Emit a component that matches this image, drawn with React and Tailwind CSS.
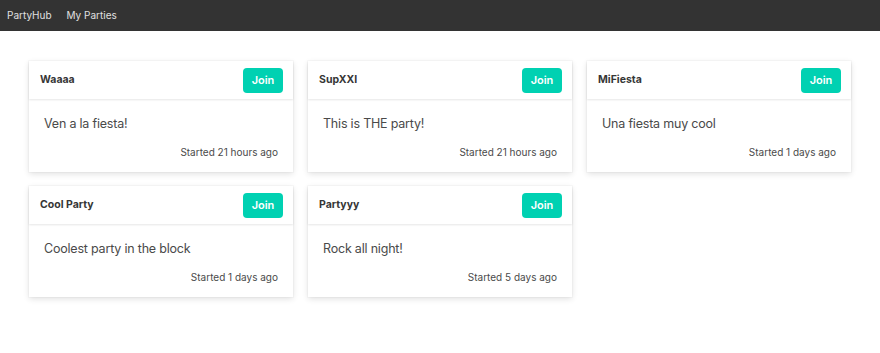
const parties = [
  { name: "Waaaa", desc: "Ven a la fiesta!", started: "Started 21 hours ago" },
  { name: "SupXXI", desc: "This is THE party!", started: "Started 21 hours ago" },
  { name: "MiFiesta", desc: "Una fiesta muy cool", started: "Started 1 days ago" },
  { name: "Cool Party", desc: "Coolest party in the block", started: "Started 1 days ago" },
  { name: "Partyyy", desc: "Rock all night!", started: "Started 5 days ago" },
];

function Card({ p }) {
  return (
    <div className="bg-white h-[111px] flex flex-col shadow-[0_2px_6px_rgba(10,10,10,0.12),0_0_0_1px_rgba(10,10,10,0.02)]">
      <div className="h-[38px] flex items-center justify-between pl-[11px] pr-[10px] shadow-[0_1px_2px_rgba(10,10,10,0.1)]">
        <span className="text-[10.5px] font-bold text-[#363636]">{p.name}</span>
        <button className="w-[40px] h-[25px] rounded-[4px] bg-[#00d1b2] text-white text-[11px] font-semibold">Join</button>
      </div>
      <div className="flex flex-col px-[15px] pt-[16px]">
        <p className="text-[12.5px] tracking-[-0.2px] text-[#4a4a4a] leading-[18px]">{p.desc}</p>
        <p className="text-[10px] text-[#4a4a4a] text-right mt-[12px] leading-[14px]">{p.started}</p>
      </div>
    </div>
  );
}

export default function App() {
  return (
    <div className="min-h-[353px] bg-white" style={{ fontFamily: "Inter, 'Noto Sans', sans-serif" }}>
      <nav className="h-[31px] bg-[#333333] flex items-center px-[7px] gap-[15px] text-[10px] text-[#e0e0e0]">
        <span>PartyHub</span>
        <span>My Parties</span>
      </nav>
      <div className="w-[822px] mx-auto mt-[30px] grid grid-cols-3 gap-x-[15px] gap-y-[14px]">
        {parties.map((p) => (
          <Card key={p.name} p={p} />
        ))}
      </div>
    </div>
  );
}
